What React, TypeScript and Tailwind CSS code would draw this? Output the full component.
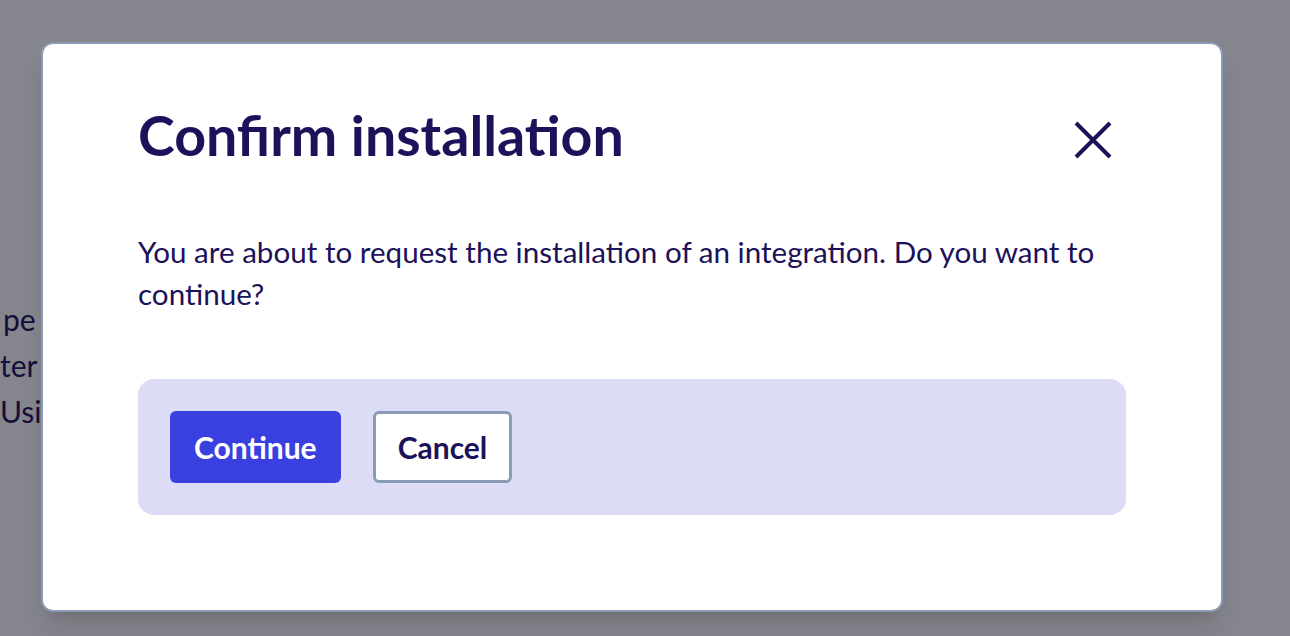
import React from 'react'

const font = { fontFamily: 'Lato, "Noto Sans", sans-serif' }

const CloseIcon = () => (
  <svg width="40" height="40" viewBox="0 0 40 40" fill="none" stroke="#1c1259" strokeWidth="4">
    <path d="M3 3 L37 37 M37 3 L3 37" />
  </svg>
)

const App: React.FC = () => {
  return (
    <div className="relative w-[1290px] h-[636px] overflow-hidden bg-white text-[#1c1259]" style={font}>
      {/* Page behind the modal */}
      <div className="pt-[296px] text-[30px] leading-[46px] whitespace-nowrap">
        <p className="pl-[3px]">pe</p>
        <p>ter</p>
        <p>Using</p>
      </div>

      {/* Overlay */}
      <div className="absolute inset-0 bg-[#0b0b1c]/50" />

      {/* Modal */}
      <div className="absolute left-[41px] top-[42px] w-[1182px] h-[570px] bg-white border-2 border-[#8a9bb5] rounded-[12px] shadow-xl px-[95px] pt-[55px]">
        <div className="flex items-start justify-between">
          <h1 className="text-[55.5px] leading-[72px] font-bold">Confirm installation</h1>
          <button className="mt-[21px] mr-[13px]">
            <CloseIcon />
          </button>
        </div>
        <p className="mt-[60px] text-[29.6px] leading-[42px]">
          You are about to request the installation of an integration. Do you want to continue?
        </p>
        <div className="mt-[64px] bg-[#dcdcf6] rounded-[16px] p-[32px] flex gap-[32px]">
          <button className="h-[72px] px-[24px] rounded-[6px] bg-[#3a40e0] text-white text-[30px] font-bold">
            Continue
          </button>
          <button className="h-[72px] px-[22px] rounded-[6px] bg-white border-[3px] border-[#8a9bb5] text-[30px] font-bold">
            Cancel
          </button>
        </div>
      </div>
    </div>
  )
}

export default App
